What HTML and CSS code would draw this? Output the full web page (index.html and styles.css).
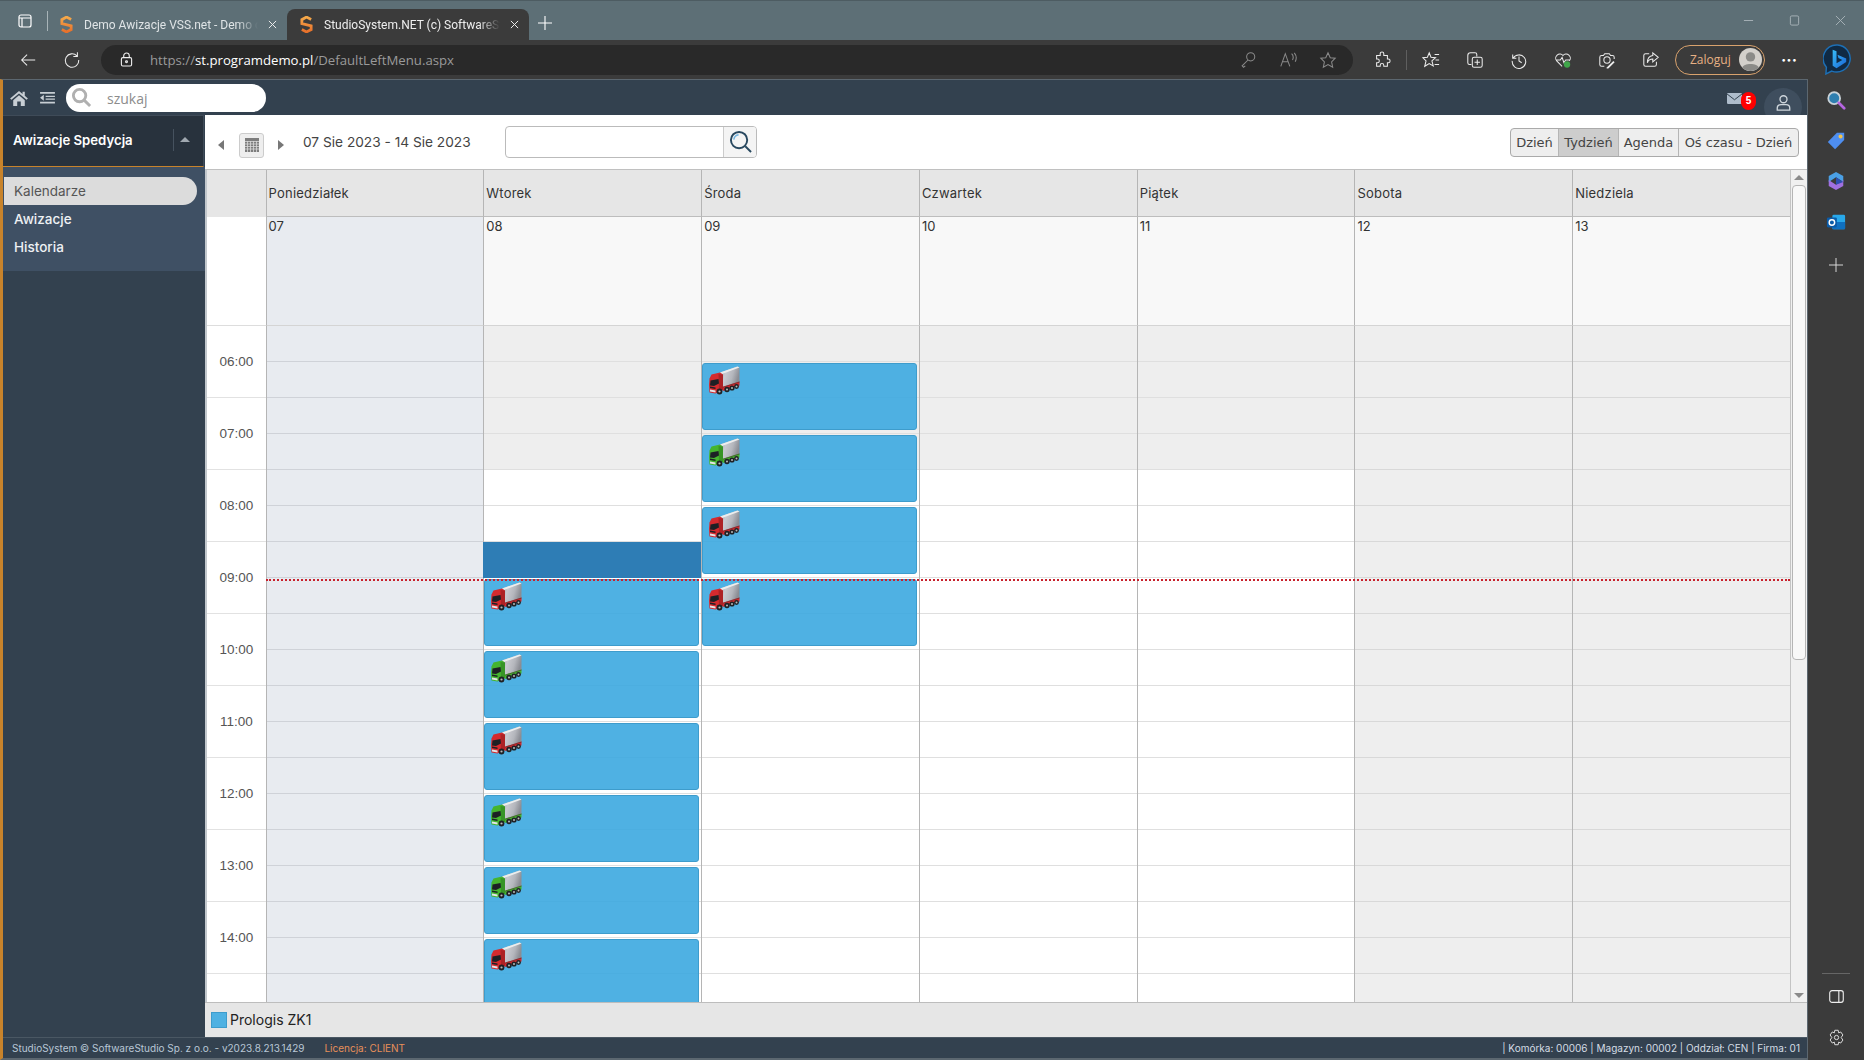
FILE: index.html
```html
<!DOCTYPE html>
<html lang="pl">
<head>
<meta charset="utf-8">
<title>StudioSystem.NET</title>
<link rel="stylesheet" href="styles.css">
</head>
<body>
<svg class="defs" aria-hidden="true">
  <defs>
    <linearGradient id="cargo" x1="0" y1="0" x2="1" y2="0.3"><stop offset="0" stop-color="#9b9da4"/><stop offset=".35" stop-color="#c9cad0"/><stop offset=".7" stop-color="#b4b6bc"/><stop offset="1" stop-color="#8b8d94"/></linearGradient>
    <linearGradient id="sorange" x1="0" y1="0" x2="0" y2="1"><stop offset="0" stop-color="#f5a94a"/><stop offset="1" stop-color="#e8702a"/></linearGradient>
    <linearGradient id="bing" x1="0" y1="0" x2="1" y2="1"><stop offset="0" stop-color="#37bdf8"/><stop offset="1" stop-color="#1b66d6"/></linearGradient>
    <symbol id="truck" viewBox="0 0 32 30">
      <path d="M12 7.500 29.500 1.500 31.500 2.500 31.500 17 14 22.500Z" fill="url(#cargo)"/>
      <path d="M12 7.500 29.500 1.500 31.500 2.500 14 9Z" fill="#eceded"/>
      <path d="M14 22 31.500 16.500 31.500 20.500 15 26Z" fill="currentColor"/>
      <path d="M14 22 31.500 16.500 31.500 17.500 14 23Z" fill="#4a2a2a" opacity=".55"/>
      <path d="M1.500 13.500 3.500 9.500 12 7.500 15 9.500 15 25 7.500 28.500 1.500 27.500 1 20Z" fill="currentColor"/>
      <path d="M10.500 9 15 9.500 15 25 11 27Z" fill="#000" opacity=".18"/>
      <path d="M2 20.500 2.500 15.500 10.500 14 11 18.500 6 21Z" fill="#1d2025"/>
      <path d="M2 21.500 7.500 22.500 7.500 24 2 23Z" fill="#1d2025"/>
      <path d="M2 24.500 7.500 25.500 7.500 27.500 2 26.500Z" fill="#e3e4e6"/>
      <circle cx="11.500" cy="26.500" r="2.900" fill="#1f2125"/>
      <circle cx="19" cy="24.500" r="2.700" fill="#1f2125"/>
      <circle cx="24" cy="23" r="2.600" fill="#1f2125"/>
      <circle cx="28.500" cy="21.500" r="2.400" fill="#1f2125"/>
      <circle cx="11.500" cy="26.500" r="1.100" fill="#b9b9b9"/>
      <circle cx="19" cy="24.500" r="1" fill="#b9b9b9"/>
      <circle cx="24" cy="23" r="1" fill="#b9b9b9"/>
      <circle cx="28.500" cy="21.500" r="1" fill="#b9b9b9"/>
    </symbol>
    <symbol id="favS" viewBox="0 0 14 18">
      <path d="M12 3.500 7 1 2 3.800 2 8 12 10.500 12 14.500 7 17 2 14.500" fill="none" stroke="url(#sorange)" stroke-width="3"/>
    </symbol>
  </defs>
</svg>

<header class="tabstrip">
  <svg class="ic-tabs" viewBox="0 0 14 14"><rect x="1" y="1" width="12" height="12" rx="2"/><path d="M1 4H13M4 4V13"/></svg>
  <span class="tabsep"></span>
  <div class="tab">
    <svg class="fav"><use href="#favS"/></svg>
    <span class="tabtitle">Demo Awizacje VSS.net - Demo c</span>
    <svg class="tabx" viewBox="0 0 10 10"><path d="M1 1 9 9M9 1 1 9"/></svg>
  </div>
  <div class="tab tab-on">
    <svg class="fav"><use href="#favS"/></svg>
    <span class="tabtitle">StudioSystem.NET (c) SoftwareSt</span>
    <svg class="tabx" viewBox="0 0 10 10"><path d="M1 1 9 9M9 1 1 9"/></svg>
  </div>
  <svg class="ic-plus" viewBox="0 0 14 14"><path d="M7 0V14M0 7H14"/></svg>
  <div class="winctl">
    <span class="wc"><svg class="wc-ic" viewBox="0 0 12 12"><path d="M1 6H11"/></svg></span>
    <span class="wc"><svg class="wc-ic" viewBox="0 0 12 12"><rect x="1.500" y="1" width="9" height="10" rx="1.500"/></svg></span>
    <span class="wc"><svg class="wc-ic" viewBox="0 0 12 12"><path d="M1 1 11 11M11 1 1 11"/></svg></span>
  </div>
</header>

<div class="browserbar">
  <span class="tb tb-first"><svg class="line" viewBox="0 0 20 20"><path d="M18 10H3M9 4 3 10 9 16"/></svg></span>
  <span class="tb"><svg class="line" viewBox="0 0 20 20"><path d="M15.500 5.500A7.500 7.500 0 1 0 17.500 10M16 1.500V6H11.500"/></svg></span>
  <div class="omni">
    <svg class="lock" viewBox="0 0 14 16"><rect x="1.500" y="6" width="11" height="9" rx="1.500"/><path d="M4 6V4A3 3 0 0 1 10 4V6"/><circle cx="7" cy="10.500" r="1"/></svg>
    <span class="url">https://<b>st.programdemo.pl</b>/DefaultLeftMenu.aspx</span>
    <span class="omni-right">
      <svg class="line dim" viewBox="0 0 20 20"><circle cx="13" cy="6.500" r="4.500"/><path d="M10 10 3.500 16.500 5 18 7 16.500"/></svg>
      <svg class="line dim" viewBox="0 0 20 20"><path d="M2 17 7 3 12 17M4 12H10M14 3C16 5 16 8 15 10M17 2C19.500 5 19.500 9 18 12"/></svg>
      <svg class="line dim" viewBox="0 0 20 20"><path d="M10 2 12.500 7.500 18 8 14 12 15.200 18 10 15 4.800 18 6 12 2 8 7.500 7.500Z"/></svg>
    </span>
  </div>
  <span class="tb tb-ext"><svg class="line" viewBox="0 0 20 20"><path d="M8 3A2 2 0 0 1 12 3V5H16V9H17A2 2 0 0 1 17 13H16V17H12V16A2 2 0 0 0 8 16V17H4V13H5A2 2 0 0 0 5 9H4V5H8Z"/></svg></span>
  <span class="barsep"></span>
  <span class="tb"><svg class="line" viewBox="0 0 20 20"><path d="M8 2 10 7 15 7.500 11 11 12.500 16.500 8 14 3 17 4.500 11 1 7.500 6 7ZM14 4H19M15 10H19M14 15H19"/></svg></span>
  <span class="tb"><svg class="line" viewBox="0 0 20 20"><path d="M6 15H4A2 2 0 0 1 2 13V5A3 3 0 0 1 5 2H10A2 2 0 0 1 12 4V6"/><rect x="7" y="7" width="11" height="11" rx="2"/><path d="M12.500 9.500V15.500M9.500 12.500H15.500"/></svg></span>
  <span class="tb"><svg class="line" viewBox="0 0 20 20"><path d="M3 4V8H7M3.500 8A7.500 7.500 0 1 1 2.500 11M10 6V11L13 13"/></svg></span>
  <span class="tb"><svg class="line" viewBox="0 0 20 20"><path d="M9 17 3 11A4.500 4.500 0 0 1 10 5A4.500 4.500 0 0 1 17 11M2 10H7L9 7 11 13 13 10H18"/><circle class="okdot" cx="14.500" cy="15" r="3.500"/></svg></span>
  <span class="tb"><svg class="line" viewBox="0 0 20 20"><path d="M7 17H4A2 2 0 0 1 2 15V7A2 2 0 0 1 4 5H6L7.500 3H12.500L14 5H16A2 2 0 0 1 18 7V9"/><circle cx="10" cy="10" r="3.500"/><path class="pen" d="M10 18 17 11 18.500 12.500 11.500 19.500 9.500 19.500Z"/></svg></span>
  <span class="tb"><svg class="line" viewBox="0 0 20 20"><path d="M8 3H4A2 2 0 0 0 2 5V15A2 2 0 0 0 4 17H14A2 2 0 0 0 16 15V12M12 2 18 7 12 12V9C9 9 7 10.500 6 13 6 9 8 5.500 12 5Z"/></svg></span>
  <div class="login"><span>Zaloguj</span>
    <svg class="avatar" viewBox="0 0 22 22"><circle cx="11" cy="11" r="11" fill="#d3d0cb"/><circle cx="11" cy="8.500" r="4.500" fill="#8b8b88"/><path d="M3 19C4 14 18 14 19 19 15 23 7 23 3 19Z" fill="#8b8b88"/></svg>
  </div>
  <span class="dots">···</span>
  <span class="bingwrap">
    <svg class="bing" viewBox="0 0 30 32"><path d="M15 1A14 14 0 1 1 9 28L3 31 3.500 24A14 14 0 0 1 15 1Z" fill="#102a44" stroke="#1d6fb5" stroke-width="1.500"/><path d="M10 6 14 7.500V20L20 16.500 16 14.500 15 11 24 15V18.500L14 25 10 22.500Z" fill="url(#bing)"/></svg>
  </span>
</div>

<div class="window">
  <div class="app">
    <div class="topbar">
      <svg class="home" viewBox="0 0 20 18"><path d="M10 1 0 9.500 1.500 11 10 4 18.500 11 20 9.500 16.500 6.500V2H14V4.500ZM3.500 11.500 10 6 16.500 11.500V18H12V13H8V18H3.500Z"/></svg>
      <svg class="outdent" viewBox="0 0 16 14"><path d="M0 1H16V3H0ZM6 5H16V6.500H6ZM6 8H16V9.500H6ZM0 11.500H16V13.500H0ZM4 4V10.500L0 7.200Z"/></svg>
      <div class="pill">
        <svg class="pill-mag" viewBox="0 0 22 22"><circle cx="9" cy="9" r="6.500"/><path d="M14 14 20 20"/></svg>
        <span class="pill-ph">szukaj</span>
      </div>
      <div class="topright">
        <span class="mailwrap">
          <svg class="mail" viewBox="0 0 18 13"><rect width="18" height="13" rx="1" fill="#aebccb"/><path d="M0 1 9 8 18 1" fill="none" stroke="#33424f" stroke-width="1.200"/></svg>
          <span class="badge">5</span>
        </span>
        <span class="usercircle">
          <svg class="user" viewBox="0 0 18 20"><circle cx="9" cy="5.500" r="4.200"/><path d="M1.500 18.500V16C1.500 13 4 12 6 12H12C14 12 16.500 13 16.500 16V18.500Z"/></svg>
        </span>
      </div>
    </div>
    <div class="middle">
      <aside class="side">
        <div class="side-head">
          <span class="side-title">Awizacje Spedycja</span>
          <span class="side-toggle"><span class="tri-up"></span></span>
        </div>
        <nav class="menu">
          <a class="mi mi-on">Kalendarze</a>
          <a class="mi">Awizacje</a>
          <a class="mi">Historia</a>
        </nav>
      </aside>
      <main class="main">
        <div class="caltools">
          <span class="tri-left"></span>
          <span class="calbtn">
            <svg class="calgrid" viewBox="0 0 14 14"><rect width="14" height="14" fill="#7d7d7d"/><path d="M0 3.500H14M0 6H14M0 8.500H14M0 11H14M2.500 3V14M5.500 3V14M8.500 3V14M11.500 3V14" stroke="#d8d8d8" stroke-width=".8"/></svg>
          </span>
          <span class="tri-right"></span>
          <span class="daterange">07 Sie 2023 - 14 Sie 2023</span>
          <div class="calsearch">
            <span class="calsearch-input"></span>
            <span class="calsearch-btn">
              <svg class="mag" viewBox="0 0 24 24"><circle cx="10.500" cy="10.500" r="8.500"/><path d="M17 17 23 23"/><path class="mag-shine" d="M5 10A6 6 0 0 1 10 5"/></svg>
            </span>
          </div>
          <div class="views">
            <span class="v v1">Dzień</span>
            <span class="v v2 v-on">Tydzień</span>
            <span class="v v3">Agenda</span>
            <span class="v v4">Oś czasu - Dzień</span>
          </div>
        </div>
        <div class="calwrap">
          <div class="cal">
            <div class="hd hd-gut"></div>
            <div class="hd">Poniedziałek</div>
            <div class="hd">Wtorek</div>
            <div class="hd">Środa</div>
            <div class="hd">Czwartek</div>
            <div class="hd">Piątek</div>
            <div class="hd">Sobota</div>
            <div class="hd">Niedziela</div>

            <div class="ad ad-gut"></div>
            <div class="ad ad-mon">07</div>
            <div class="ad">08</div>
            <div class="ad">09</div>
            <div class="ad">10</div>
            <div class="ad">11</div>
            <div class="ad">12</div>
            <div class="ad">13</div>

            <div class="gutter">
              <div class="hr">06:00</div>
              <div class="hr">07:00</div>
              <div class="hr">08:00</div>
              <div class="hr">09:00</div>
              <div class="hr">10:00</div>
              <div class="hr">11:00</div>
              <div class="hr">12:00</div>
              <div class="hr">13:00</div>
              <div class="hr">14:00</div>
              <div class="hr"></div>
            </div>
            <div class="day day-mon"></div>
            <div class="day day-work">
              <div class="selcell"></div>
              <div class="ev h09"><svg class="truck red"><use href="#truck"/></svg></div>
              <div class="ev h10"><svg class="truck green"><use href="#truck"/></svg></div>
              <div class="ev h11"><svg class="truck red"><use href="#truck"/></svg></div>
              <div class="ev h12"><svg class="truck green"><use href="#truck"/></svg></div>
              <div class="ev h13"><svg class="truck green"><use href="#truck"/></svg></div>
              <div class="ev h14"><svg class="truck red"><use href="#truck"/></svg></div>
            </div>
            <div class="day day-work">
              <div class="ev h06"><svg class="truck red"><use href="#truck"/></svg></div>
              <div class="ev h07"><svg class="truck green"><use href="#truck"/></svg></div>
              <div class="ev h08"><svg class="truck red"><use href="#truck"/></svg></div>
              <div class="ev h09"><svg class="truck red"><use href="#truck"/></svg></div>
            </div>
            <div class="day day-work"></div>
            <div class="day day-work"></div>
            <div class="day day-off"></div>
            <div class="day day-off"></div>
            <div class="nowline"></div>
          </div>
          <div class="vscroll">
            <span class="sb-up"></span>
            <span class="sb-thumb"></span>
            <span class="sb-down"></span>
          </div>
        </div>
        <div class="legend"><span class="swatch"></span><span>Prologis ZK1</span></div>
      </main>
    </div>
    <footer class="foot">
      <span class="foot-copy">StudioSystem © SoftwareStudio Sp. z o.o. - v2023.8.213.1429</span>
      <span class="foot-lic">Licencja: CLIENT</span>
      <span class="foot-right">| Komórka: 00006 | Magazyn: 00002 | Oddział: CEN | Firma: 01</span>
    </footer>
  </div>
  <aside class="edge">
    <svg class="edge-ic" viewBox="0 0 22 22"><circle cx="9" cy="9" r="6.500" fill="#2f7fb0" stroke="#c9d2d8" stroke-width="2"/><path d="M14 14 20 20" stroke="#b565e0" stroke-width="3" stroke-linecap="round"/></svg>
    <svg class="edge-ic" viewBox="0 0 22 22"><path d="M12 2H20V10L10 20 2 12Z" fill="#4e8ef0"/><circle cx="16" cy="6" r="2.200" fill="#f3c34a"/></svg>
    <svg class="edge-ic" viewBox="0 0 22 22"><path d="M11 1 19 5.500V12L11 7 3 12V5.500Z" fill="#4aa0e6"/><path d="M3 10 11 15 19 10V16.500L11 21 3 16.500Z" fill="#a070e0"/><path d="M11 7 19 12 11 15Z" fill="#2d4fb0"/></svg>
    <svg class="edge-ic" viewBox="0 0 22 22"><rect x="7" y="3" width="14" height="16" rx="1.500" fill="#28a8ea"/><path d="M7 11H21V19H7Z" fill="#0f70c0"/><rect x="1" y="6" width="11" height="11" rx="1.500" fill="#0a5ba8"/><circle cx="6.500" cy="11.500" r="3" fill="none" stroke="#fff" stroke-width="1.600"/></svg>
    <svg class="edge-plus" viewBox="0 0 16 16"><path d="M8 0V16M0 8H16"/></svg>
    <span class="edge-fill"></span>
    <span class="edge-rule"></span>
    <svg class="edge-panel" viewBox="0 0 16 14"><rect x=".7" y=".7" width="14.600" height="12.600" rx="2.500"/><path d="M10.500 1V13"/></svg>
    <svg class="edge-gear" viewBox="0 0 20 20"><path d="M8 1.500H12L12.500 4.500 15 3.500 17.500 7 15.500 10 17.500 13 15 16.500 12.500 15.500 12 18.500H8L7.500 15.500 5 16.500 2.500 13 4.500 10 2.500 7 5 3.500 7.500 4.500Z"/><circle cx="10" cy="10" r="2.500"/></svg>
  </aside>
</div>
</body>
</html>
```

FILE: styles.css
```css
* { box-sizing: border-box; }
html, body { margin: 0; padding: 0; height: 100%; }
body {
  width: 1864px; height: 1060px; overflow: hidden;
  display: flex; flex-direction: column;
  background: #3b3b3b;
  font-family: "Inter", "Liberation Sans", sans-serif;
}
.defs { display: block; width: 0; height: 0; }

/* browser chrome */
.tabstrip {
  height: 40px; flex: none; display: flex; align-items: flex-end;
  background: #5d6f76; border-top: 1px solid #4d5c62;
  font-family: "Roboto", sans-serif; font-size: 12px; color: #dfe4e6;
}
.ic-tabs { width: 14px; height: 14px; margin: 0 0 12px 18px; fill: none; stroke: #fff; stroke-width: 1.2; }
.tabsep { width: 1px; height: 20px; margin: 0 0 9px 15px; background: #a8b4b8; }
.tab {
  width: 239px; height: 31px; display: flex; align-items: center;
  padding: 0 10px 0 12px; flex: none;
}
.tab-on { width: 242px; background: #3b3b3b; border-radius: 8px 8px 0 0; color: #eee; padding-left: 13px; }
.fav { width: 13px; height: 17px; flex: none; }
.tabtitle {
  margin-left: 11px; flex: 1; white-space: nowrap; min-width: 0;
  -webkit-mask-image: linear-gradient(90deg, #000 88%, transparent);
  mask-image: linear-gradient(90deg, #000 88%, transparent);
}
.tabx { width: 9px; height: 9px; margin-left: 10px; flex: none; fill: none; stroke: #eee; stroke-width: 1.1; }
.ic-plus { width: 14px; height: 14px; margin: 0 0 10px 9px; fill: none; stroke: #fff; stroke-width: 1.1; }
.winctl { margin: 0 0 0 auto; display: flex; align-self: flex-start; height: 40px; padding-right: 1px; }
.wc { width: 46px; display: flex; align-items: center; justify-content: center; height: 40px; padding-bottom: 1px; }
.wc-ic { width: 11px; height: 11px; fill: none; stroke: #aab5ba; stroke-width: 1; }

.browserbar {
  height: 39px; flex: none; display: flex; align-items: center;
  background: #3b3b3b;
}
.tb { width: 44px; height: 30px; flex: none; display: flex; align-items: center; justify-content: center; }
.tb-first { margin-left: 6px; }
.tb-ext { margin-left: 7px; }
.line { width: 18px; height: 18px; fill: none; stroke: #ececec; stroke-width: 1.15; flex: none; }
.line.dim { stroke: #8a8a8a; }
.okdot { fill: #3fa64a; stroke: none; }
.pen { fill: #eee; stroke: none; }
.barsep { width: 1px; height: 20px; background: #5f5f5f; margin: 0 2px; flex: none; }
.omni {
  width: 1252px; height: 30px; margin-left: 7px; flex: none;
  background: #292929; border-radius: 15px;
  display: flex; align-items: center; padding: 0 16px 0 19px;
  font-family: "Open Sans", sans-serif; font-size: 13.200px; color: #9a9a9a;
}
.lock { width: 13px; height: 15px; fill: none; stroke: #eee; stroke-width: 1.2; flex: none; }
.url { margin-left: 17px; white-space: nowrap; }
.url b { font-weight: 400; color: #fff; }
.omni-right { margin-left: auto; display: flex; gap: 22px; }
.login {
  width: 90px; height: 30px; margin-left: 2px; flex: none;
  border: 1px solid #d9a26d; border-radius: 15px;
  display: flex; align-items: center; justify-content: space-between;
  padding: 0 2px 0 14px;
  font-family: "Open Sans", sans-serif; font-size: 12px; color: #e8b184;
}
.avatar { width: 23px; height: 23px; flex: none; }
.dots { width: 44px; margin-left: 2px; text-align: center; color: #fff; font-size: 16px; font-weight: 700; line-height: 20px; flex: none; }
.bingwrap { width: 44px; margin-left: 4px; display: flex; justify-content: center; flex: none; }
.bing { width: 29px; height: 31px; }

/* page */
.window { flex: 1; display: flex; min-height: 0; }
.app {
  flex: 1; min-width: 0; display: flex; flex-direction: column;
  background: #33414f;
  border-left: 3px solid #c8832b; border-top: 1px solid #5c6770; border-right: 1px solid #5c6770; border-bottom: 2px solid #5c6770;
}
.topbar { height: 35px; flex: none; display: flex; align-items: center; background: #33414f; overflow: hidden; }
.home { width: 18px; height: 16px; margin-left: 7px; fill: #c8ced4; flex: none; }
.outdent { width: 15px; height: 13px; margin-left: 12px; fill: #c8ced4; flex: none; }
.pill {
  width: 200px; height: 28px; margin-left: 11px; flex: none;
  background: #fff; border-radius: 14px; display: flex; align-items: center; padding-left: 5px;
}
.pill-mag { width: 21px; height: 21px; fill: none; stroke: #b0b0b0; stroke-width: 3; flex: none; }
.pill-ph { margin-left: 15px; padding-top: 2px; font-family: "Open Sans", sans-serif; font-size: 14px; color: #8c8c8c; }
.topright { margin-left: auto; display: flex; align-items: flex-start; height: 100%; }
.mailwrap { width: 32px; margin-top: 13px; display: flex; position: relative; }
.mail { width: 15px; height: 11px; margin-top: 0; }
.badge {
  position: absolute; left: 14px; top: -1px; width: 15px; height: 18px; border-radius: 8px;
  background: #f00; color: #fff; font: 700 10px/18px "Liberation Sans", sans-serif; text-align: center;
}
.usercircle {
  width: 38px; height: 38px; margin: 8px 5px 0 5px; border-radius: 50%; background: #3f4e5e;
  display: flex; justify-content: center; padding-top: 6px;
}
.user { width: 15px; height: 18px; fill: none; stroke: #cfd6dc; stroke-width: 1.6; }
.middle { flex: 1; display: flex; min-height: 0; }
.side { width: 202px; flex: none; background: #33414f; }
.side-head {
  height: 52px; background: #28323d;
  border-bottom: 1px solid #c8832b; border-right: 1px solid #3f4b58; border-top: 1px solid #3f4b58;
  display: flex; align-items: center; justify-content: space-between; padding-bottom: 3px;
  margin-right: 1px;
}
.side-title { margin-left: 10px; color: #fff; font-size: 13.200px; font-weight: 600; }
.side-toggle { width: 30px; height: 22px; border-left: 1px solid #46525f; display: flex; align-items: center; padding: 0 0 1px 6px; }
.tri-up { width: 0; height: 0; border-left: 5px solid transparent; border-right: 5px solid transparent; border-bottom: 5px solid #a0a8b0; }
.menu { background: #3f5064; height: 104px; padding-top: 10px; display: flex; flex-direction: column; }
.mi { height: 28px; display: flex; align-items: center; padding-left: 11px; font-size: 13.500px; font-weight: 500; color: #eef1f4; }
.mi-on { width: 193px; margin-left: 1px; padding-left: 10px; background: #dcdcdc; color: #555; border-radius: 0 14px 14px 0; font-weight: 400; }
.main { flex: 1; min-width: 0; display: flex; flex-direction: column; background: #fff; }
.caltools { height: 54px; flex: none; display: flex; align-items: center; padding: 0 8px 0 13px; }
.tri-left { width: 0; height: 0; border-top: 5px solid transparent; border-bottom: 5px solid transparent; border-right: 6px solid #777; margin-right: 15px; margin-top: 5px; }
.tri-right { width: 0; height: 0; border-top: 5px solid transparent; border-bottom: 5px solid transparent; border-left: 6px solid #777; margin-left: 14px; margin-top: 5px; }
.calbtn { width: 25px; height: 25px; border: 1px solid #ccc; border-radius: 3px; background: #eee; display: flex; align-items: center; justify-content: center; margin-top: 6px; }
.calgrid { width: 14px; height: 14px; }
.daterange { margin-left: 19px; font-size: 13.700px; color: #444; white-space: nowrap; width: 202px; }
.calsearch { width: 252px; height: 32px; margin-top: -1px; border: 1px solid #bbb; border-radius: 4px; display: flex; background: #fff; }
.calsearch-input { flex: 1; }
.calsearch-btn { width: 33px; border-left: 1px solid #ccc; background: #f4f4f4; border-radius: 0 3px 3px 0; display: flex; align-items: center; justify-content: center; }
.mag { width: 23px; height: 23px; fill: none; stroke: #28485f; stroke-width: 2; }
.mag-shine { stroke: #74b5e0; stroke-width: 1.5; }
.views { margin-left: auto; display: flex; height: 29px; border: 1px solid #aaa; border-radius: 4px; background: #eee; font-family: "DejaVu Sans", sans-serif; font-size: 13px; color: #444; }
.v { display: flex; align-items: center; justify-content: center; border-left: 1px solid #b5b5b5; white-space: nowrap; }
.v1 { width: 47px; border-left: 0; }
.v2 { width: 60px; }
.v3 { width: 60px; }
.v4 { width: 120px; }
.v-on { background: #cdcdcd; }

.calwrap { height: 833px; flex: none; display: flex; }
.cal {
  flex: 1; min-width: 0; position: relative; overflow: hidden;
  display: grid;
  grid-template-columns: 58.600px repeat(7, 1fr);
  grid-template-rows: 47px 109px 684px;
  border-left: 2px solid #c2c7cc; border-top: 1px solid #c0c0c0;
  font-size: 13px; color: #333;
}
.hd {
  background: #e6e6e6; border-left: 1px solid #b5b5b5; border-bottom: 1px solid #bdbdbd;
  display: flex; align-items: center; padding-left: 2px; letter-spacing: .2px; color: #333;
}
.hd-gut { border-left: 0; border-bottom: 0; }
.ad { background: #f8f8f8; border-left: 1px solid #b5b5b5; border-bottom: 1px solid #d4d4d4; padding: 1px 0 0 2px; line-height: 16px; color: #333; }
.ad-gut { background: #fff; border-left: 0; border-bottom: 1px solid #ddd; }
.ad-mon { background: #e8ebf0; }
.gutter { background: #fff; display: flex; flex-direction: column; overflow: hidden; }
.hr {
  height: 72px; flex: none; border-bottom: 1px solid #e2e2e2;
  display: flex; align-items: center; justify-content: center;
  font-family: "Liberation Sans", sans-serif; font-size: 13.500px; color: #555;
}
.day {
  border-left: 1px solid #b5b5b5;
  display: grid; grid-template-columns: minmax(0, 1fr); grid-template-rows: repeat(19, 36px);
}
.day-mon { background: repeating-linear-gradient(180deg, transparent 0 35px, #cfd2d8 35px 36px), #e8ebf0; }
.day-off { background: repeating-linear-gradient(180deg, transparent 0 35px, #d8d8d8 35px 36px), #eeeeee; }
.day-work { background: repeating-linear-gradient(180deg, transparent 0 35px, #dfdfdf 35px 36px), linear-gradient(180deg, #eeeeee 0 144px, #ffffff 144px); }
.selcell { grid-row: 7; grid-column: 1; background: #2e7db5; margin: 0 0 0 -1px; }
.ev {
  grid-column: 1; height: 67px; margin: 1px 2px 0 0;
  background: rgba(60, 168, 224, .9);
  border: 1px solid #3e9ccc; border-radius: 3px;
  padding: 1px 0 0 5px;
}
.h06 { grid-row: 2 / span 2; }
.h07 { grid-row: 4 / span 2; }
.h08 { grid-row: 6 / span 2; }
.h09 { grid-row: 8 / span 2; }
.h10 { grid-row: 10 / span 2; }
.h11 { grid-row: 12 / span 2; }
.h12 { grid-row: 14 / span 2; }
.h13 { grid-row: 16 / span 2; }
.h14 { grid-row: 18 / span 2; }
.truck { display: block; width: 32px; height: 30px; }
.red { color: #d42a2e; }
.green { color: #45b52f; }
.nowline { position: absolute; left: 58.600px; right: 0; top: 409px; border-top: 2px dotted #c8202c; }

.vscroll { width: 17px; flex: none; background: #f0f0f0; border-left: 1px solid #c4c4c4; border-top: 1px solid #c0c0c0; display: flex; flex-direction: column; align-items: center; padding: 5px 0 4px 0; }
.sb-up { width: 0; height: 0; border-left: 5px solid transparent; border-right: 5px solid transparent; border-bottom: 5px solid #8a8a8a; }
.sb-thumb { width: 14px; height: 475px; margin-top: 5px; background: #f8f8f8; border: 1px solid #b5b5b5; border-radius: 4px; }
.sb-down { width: 0; height: 0; margin-top: auto; border-left: 5px solid transparent; border-right: 5px solid transparent; border-top: 5px solid #8a8a8a; }
.legend { flex: 1; min-height: 0; display: flex; align-items: center; background: #e6e6e6; border-top: 1px solid #bdbdbd; padding: 0 0 1px 6px; font-size: 14px; color: #222; }
.swatch { width: 16px; height: 16px; background: #4fb1e2; border: 1px solid #3e9ccc; margin-right: 3px; }
.foot { height: 21px; flex: none; display: flex; align-items: center; padding: 0 7px 0 9px; background: #33414f; border-top: 1px solid #4a5763; font-size: 10px; color: #b9c7d6; white-space: nowrap; }
.foot-lic { margin-left: 20px; color: #e8905a; }
.foot-right { margin-left: auto; color: #d5dde5; }

.edge { width: 56px; flex: none; background: #3b3b3b; display: flex; flex-direction: column; align-items: center; padding: 11px 0 14px; }
.edge-ic { width: 20px; height: 20px; margin-bottom: 20.500px; flex: none; }
.edge-plus { width: 14px; height: 14px; margin-top: 6px; fill: none; stroke: #ddd; stroke-width: 1.1; flex: none; }
.edge-fill { flex: 1; }
.edge-rule { width: 28px; height: 1px; background: #666; margin-bottom: 16px; flex: none; }
.edge-panel { width: 15px; height: 13px; margin-bottom: 26px; fill: none; stroke: #eee; stroke-width: 1.200; flex: none; }
.edge-gear { width: 17px; height: 17px; fill: none; stroke: #e5e5e5; stroke-width: 1.100; flex: none; }
```
